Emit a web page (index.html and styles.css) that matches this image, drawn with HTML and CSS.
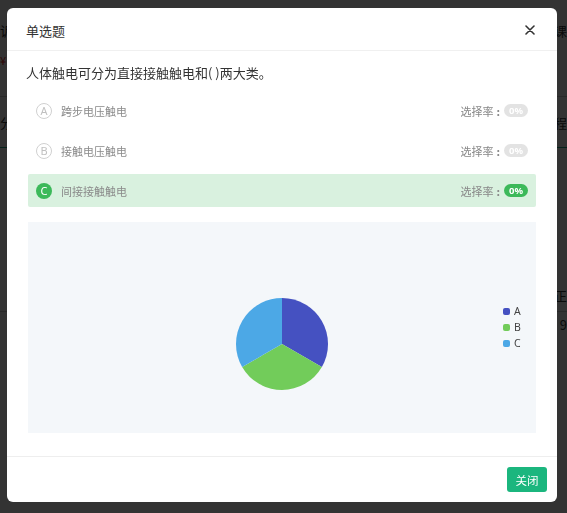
FILE: index.html
```html
<!DOCTYPE html>
<html lang="zh-CN">
<head>
<meta charset="utf-8">
<title>单选题</title>
<link rel="stylesheet" href="styles.css">
</head>
<body>
<div class="page">
  <div class="prow r1"><span class="pl">诉</span><span class="pr">课</span></div>
  <div class="prow r1b"><span class="pl red">¥</span><span class="pr"></span></div>
  <div class="prow r2"><span class="pl">分</span><span class="pr">程</span></div>
  <div class="prow r3"><span class="pl"></span><span class="pr">正</span></div>
  <div class="prow r4"><span class="pl"></span><span class="pr">9</span></div>
</div>
<div class="mask"></div>
<div class="modal">
  <div class="modal-header">
    <span class="modal-title">单选题</span>
    <span class="close-x">
      <svg width="10" height="10" viewBox="0 0 10 10"><path d="M1 1L9 9M9 1L1 9" stroke="#333" stroke-width="1.6" stroke-linecap="round"/></svg>
    </span>
  </div>
  <div class="modal-body">
    <div class="question">人体触电可分为直接接触触电和( )两大类。</div>
    <div class="options">
      <div class="option">
        <span class="letter">A</span>
        <span class="opt-text">跨步电压触电</span>
        <span class="rate">选择率<span class="colon">:</span><span class="badge">0%</span></span>
      </div>
      <div class="option">
        <span class="letter">B</span>
        <span class="opt-text">接触电压触电</span>
        <span class="rate">选择率<span class="colon">:</span><span class="badge">0%</span></span>
      </div>
      <div class="option correct">
        <span class="letter">C</span>
        <span class="opt-text">间接接触触电</span>
        <span class="rate">选择率<span class="colon">:</span><span class="badge">0%</span></span>
      </div>
    </div>
    <div class="chart">
      <svg class="pie" width="508" height="211" viewBox="0 0 508 211">
        <path d="M254 122 L254 76 A46 46 0 0 1 293.84 145 Z" fill="#4551c1"/>
        <path d="M254 122 L293.84 145 A46 46 0 0 1 214.16 145 Z" fill="#72cc5a"/>
        <path d="M254 122 L214.16 145 A46 46 0 0 1 254 76 Z" fill="#4ca8e6"/>
      </svg>
      <ul class="legend">
        <li><i class="sw sw-a"></i>A</li>
        <li><i class="sw sw-b"></i>B</li>
        <li><i class="sw sw-c"></i>C</li>
      </ul>
    </div>
  </div>
  <div class="modal-footer">
    <button class="btn-close">关闭</button>
  </div>
</div>
</body>
</html>
```

FILE: styles.css
```css
html, body {
  margin: 0;
  padding: 0;
  width: 567px;
  height: 513px;
  overflow: hidden;
  font-family: "Noto Sans CJK SC", "Noto Sans", sans-serif;
}
.page {
  width: 567px;
  height: 513px;
  background: #fff;
  display: flex;
  flex-direction: column;
}
.prow {
  display: flex;
  justify-content: space-between;
  font-size: 13px;
  color: #333;
  white-space: nowrap;
}
.red { color: #d22; font-size: 11px; }
.r1 { height: 44px; align-items: center; padding-top: 8px; }
.r1b { height: 44px; border-bottom: 1px solid #ccc; }
.r2 { height: 50px; align-items: center; border-bottom: 1px solid #2a8; }
.r3 { height: 157px; align-items: flex-end; padding-bottom: 6px; border-bottom: 1px solid #ccc; }
.r4 { height: 24px; align-items: center; }
.mask {
  position: fixed;
  inset: 0;
  background: rgba(0, 0, 0, 0.8);
}
.modal {
  position: fixed;
  left: 7px;
  top: 8px;
  width: 550px;
  height: 494px;
  background: #fff;
  border-radius: 6px;
  display: flex;
  flex-direction: column;
}
.modal-header {
  height: 42px;
  border-bottom: 1px solid #f0f0f0;
  display: flex;
  align-items: center;
  justify-content: space-between;
  padding: 0 22px 0 19px;
}
.modal-title {
  font-size: 13px;
  color: #333;
  margin-top: 2px;
}
.close-x {
  display: flex;
  margin-top: 2px;
}
.modal-body {
  flex: 1;
  padding: 0 21px;
  display: flex;
  flex-direction: column;
}
.question {
  margin: 11px 0 0 -2px;
  font-size: 13px;
  line-height: 22px;
  color: #333;
}
.options {
  margin-top: 10px;
  display: flex;
  flex-direction: column;
  gap: 7px;
}
.option {
  height: 33px;
  display: flex;
  align-items: center;
  padding: 0 8px;
  border-radius: 2px;
  font-size: 11px;
  color: #888;
}
.letter {
  width: 14px;
  height: 14px;
  border: 1px solid #d0d0d0;
  border-radius: 50%;
  display: flex;
  align-items: center;
  justify-content: center;
  font-size: 11px;
  color: #c0c0c0;
  margin-right: 9px;
  font-family: "Noto Sans", sans-serif;
}
.opt-text { flex: 1; color: #8a8a8a; }
.rate { display: flex; align-items: center; color: #888; }
.colon { margin: 0 4px 0 3px; font-weight: bold; }
.badge {
  height: 13px;
  padding: 0 5px;
  border-radius: 7px;
  background: #e3e3e3;
  color: #fff;
  font-size: 9.5px;
  font-weight: bold;
  line-height: 13px;
  font-family: "Noto Sans", sans-serif;
}
.correct { background: #d9f1df; }
.correct .letter {
  width: 16px;
  height: 16px;
  border: none;
  background: #3cb95a;
  color: #fff;
}
.correct .badge { background: #3cb95a; }
.chart {
  margin-top: 15px;
  height: 211px;
  background: #f4f7fa;
  position: relative;
}
.pie { display: block; }
.legend {
  position: absolute;
  left: 475px;
  top: 81px;
  margin: 0;
  padding: 0;
  list-style: none;
  font-size: 10.5px;
  color: #444;
  font-family: "Noto Sans", sans-serif;
}
.legend li {
  height: 16px;
  display: flex;
  align-items: center;
}
.sw {
  width: 7px;
  height: 7px;
  border-radius: 2px;
  margin-right: 4px;
}
.sw-a { background: #4551c1; }
.sw-b { background: #72cc5a; }
.sw-c { background: #4ca8e6; }
.modal-footer {
  border-top: 1px solid #eee;
  height: 46px;
  display: flex;
  justify-content: flex-end;
  align-items: flex-start;
  padding: 10px 10px 0 0;
  box-sizing: border-box;
}
.btn-close {
  width: 40px;
  height: 25px;
  border: none;
  border-radius: 3px;
  background: #1bb67e;
  color: #fff;
  font-size: 11.5px;
  font-family: "Noto Sans CJK SC", sans-serif;
  padding: 0;
}
```
